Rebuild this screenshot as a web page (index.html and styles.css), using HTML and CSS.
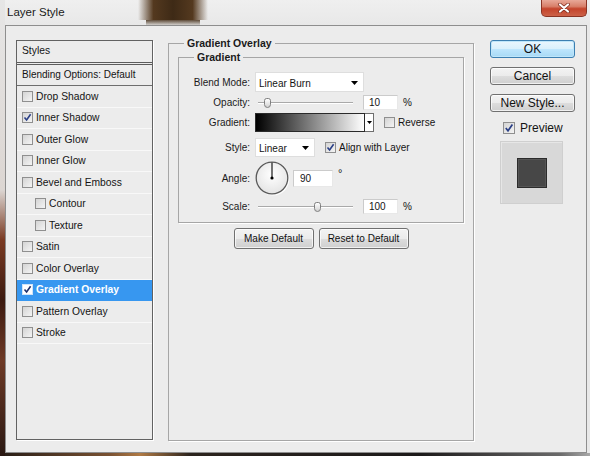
FILE: index.html
```html
<!DOCTYPE html>
<html>
<head>
<meta charset="utf-8">
<title>Layer Style</title>
<link rel="stylesheet" href="styles.css">
</head>
<body>
<div class="window">
  <div class="titlebar">
    <span class="title">Layer Style</span>
    <div class="close">
      <svg width="12" height="10" viewBox="0 0 12 10"><path d="M2 1.5 L10 8.5 M10 1.5 L2 8.5" stroke="#7a2a1c" stroke-width="3.6" stroke-linecap="round"/><path d="M2 1.5 L10 8.5 M10 1.5 L2 8.5" stroke="#ffffff" stroke-width="2.2" stroke-linecap="round"/></svg>
    </div>
  </div>
  <div class="client">
    <div class="styles-list">
      <div class="hdr">Styles</div>
      <div class="blend">Blending Options: Default</div>
      <div class="item"><span class="cb"></span>Drop Shadow</div>
      <div class="item"><span class="cb"><svg viewBox="0 0 9 9" width="9" height="9"><path d="M1.5 4.5 L3.6 7 L7.6 1.2" fill="none" stroke="#2a3f86" stroke-width="1.6"/></svg></span>Inner Shadow</div>
      <div class="item"><span class="cb"></span>Outer Glow</div>
      <div class="item"><span class="cb"></span>Inner Glow</div>
      <div class="item"><span class="cb"></span>Bevel and Emboss</div>
      <div class="item sub"><span class="cb"></span>Contour</div>
      <div class="item sub"><span class="cb"></span>Texture</div>
      <div class="item"><span class="cb"></span>Satin</div>
      <div class="item"><span class="cb"></span>Color Overlay</div>
      <div class="item selected"><span class="cb white"><svg viewBox="0 0 9 9" width="9" height="9"><path d="M1.5 4.5 L3.6 7 L7.6 1.2" fill="none" stroke="#1d2f6a" stroke-width="1.6"/></svg></span>Gradient Overlay</div>
      <div class="item"><span class="cb"></span>Pattern Overlay</div>
      <div class="item"><span class="cb"></span>Stroke</div>
    </div>

    <fieldset class="group outer">
      <legend>Gradient Overlay</legend>
      <fieldset class="group inner">
        <legend>Gradient</legend>
        <div class="form">
          <span class="lbl">Blend Mode:</span>
          <div class="ctl">
            <div class="select wide"><span>Linear Burn</span><svg width="7" height="4" viewBox="0 0 7 4"><polygon points="0,0 7,0 3.5,4" fill="#000"/></svg></div>
          </div>

          <span class="lbl">Opacity:</span>
          <div class="ctl">
            <div class="slider"><div class="track"></div><div class="thumb thumb-opacity"></div></div>
            <div class="num">10</div>
            <span class="unit">%</span>
          </div>

          <span class="lbl">Gradient:</span>
          <div class="ctl">
            <div class="swatch"></div>
            <div class="swatch-btn"><svg width="5" height="3" viewBox="0 0 5 3"><polygon points="0,0 5,0 2.5,3" fill="#000"/></svg></div>
            <span class="cb gap10"></span>
            <span class="cbtext">Reverse</span>
          </div>

          <span class="lbl">Style:</span>
          <div class="ctl">
            <div class="select narrow"><span>Linear</span><svg width="7" height="4" viewBox="0 0 7 4"><polygon points="0,0 7,0 3.5,4" fill="#000"/></svg></div>
            <span class="cb gap10"><svg viewBox="0 0 9 9" width="9" height="9"><path d="M1.5 4.5 L3.6 7 L7.6 1.2" fill="none" stroke="#2a3f86" stroke-width="1.6"/></svg></span>
            <span class="cbtext">Align with Layer</span>
          </div>

          <span class="lbl">Angle:</span>
          <div class="ctl">
            <svg class="dial" width="34" height="34" viewBox="0 0 34 34">
              <defs><radialGradient id="dg" cx="50%" cy="40%" r="60%"><stop offset="0" stop-color="#ffffff"/><stop offset="1" stop-color="#e4e4e4"/></radialGradient></defs>
              <circle cx="17" cy="17" r="15.8" fill="url(#dg)" stroke="#5a5a5a" stroke-width="1.3"/>
              <line x1="17" y1="17" x2="17" y2="1.5" stroke="#1a1a1a" stroke-width="1.2"/>
              <circle cx="17" cy="17" r="1.6" fill="#000"/>
            </svg>
            <div class="num angle">90</div>
            <span class="deg">°</span>
          </div>

          <span class="lbl">Scale:</span>
          <div class="ctl">
            <div class="slider"><div class="track"></div><div class="thumb thumb-scale"></div></div>
            <div class="num">100</div>
            <span class="unit">%</span>
          </div>
        </div>
      </fieldset>
      <div class="btnrow">
        <div class="btn small w80">Make Default</div>
        <div class="btn small w90">Reset to Default</div>
      </div>
    </fieldset>

    <div class="right">
      <div class="btn big ok">OK</div>
      <div class="btn big">Cancel</div>
      <div class="btn big">New Style...</div>
      <div class="preview-row">
        <span class="cb big-cb"><svg viewBox="0 0 10 10" width="10" height="10"><path d="M1.8 5 L4 7.8 L8.4 1.4" fill="none" stroke="#2a3f86" stroke-width="1.7"/></svg></span>
        <span>Preview</span>
      </div>
      <div class="preview-box"><div class="preview-square"></div></div>
    </div>
  </div>
</div>
</body>
</html>
```

FILE: styles.css
```css
* { box-sizing: border-box; }
html, body { margin: 0; padding: 0; }
body {
  width: 590px;
  height: 456px;
  overflow: hidden;
  font-family: "Liberation Sans", Arial, sans-serif;
  color: #141414;
  background:
    linear-gradient(to right, rgba(120, 100, 80, 0) 0, #54391f 22%, #3e2a16 50%, #54391f 78%, rgba(120, 100, 80, 0) 100%) 138px 0 / 70px 20px no-repeat,
    linear-gradient(to bottom, rgba(70, 48, 26, 0.85), rgba(140, 120, 100, 0)) 146px 20px / 54px 6px no-repeat,
    linear-gradient(to bottom, #e6e6e6 0, #dcd6d2 190px, #7a3a22 240px, #3c1a10 300px, #6e3a26 360px, #2a1812 456px) 0 0 / 5px 456px no-repeat,
    linear-gradient(to right, #261c16 0, #7a5232 110px, #b07a44 140px, #2c241e 190px, #1c1a1a 420px, #6a6a6a 560px, #a8a8a8 590px) 0 453px / 590px 3px no-repeat,
    linear-gradient(to bottom, #efefef, #e8e8e8 25px);
}

.window {
  display: flex;
  flex-direction: column;
  height: 456px;
}

.titlebar {
  height: 25px;
  display: flex;
  justify-content: space-between;
  align-items: flex-start;
}
.title {
  font-size: 11.5px;
  line-height: 24px;
  padding-left: 7px;
  color: #1a1a1a;
}
.close {
  width: 46px;
  height: 17px;
  margin-right: 3px;
  border: 1px solid #8a3424;
  border-top: none;
  border-radius: 0 0 5px 5px;
  background: linear-gradient(to bottom, #e8a898 0%, #d8806a 40%, #c4442c 55%, #cc6248 100%);
  display: flex;
  align-items: center;
  justify-content: center;
}

.client {
  margin-left: 5px;
  width: 582px;
  height: 428px;
  border: 1px solid #8e8e8e;
  background: #ececec;
  display: flex;
  align-items: flex-start;
  padding: 10px 10px 0 10px;
}

/* Left styles list */
.styles-list {
  width: 137px;
  height: 400px;
  margin-top: 4px;
  border: 1px solid #626262;
  box-shadow: 1px 1px 0 #ffffff;
  font-size: 10.3px;
  background: #ececec;
}
.hdr {
  height: 24px;
  padding-left: 5px;
  line-height: 20px;
  border-bottom: 3px double #5c5c5c;
}
.blend {
  height: 21px;
  padding-left: 5px;
  line-height: 19px;
  border-bottom: 1px solid #6e6e6e;
  font-size: 10px;
}
.item {
  height: 21.5px;
  display: flex;
  align-items: center;
  gap: 3px;
  padding-left: 5px;
  border-bottom: 1px solid #f8f8f8;
}
.item.sub { padding-left: 18px; }
.item.selected {
  background: #3797f0;
  color: #ffffff;
  font-weight: bold;
  border-bottom-color: #3797f0;
}

.cb {
  width: 11px;
  height: 11px;
  flex: none;
  border: 1px solid #8f8f8f;
  background: linear-gradient(135deg, #d4d4d4, #f4f4f4);
  display: inline-flex;
  align-items: center;
  justify-content: center;
}
.cb.white { background: #ffffff; border-color: #d0e4f8; }
.cb svg { display: block; }

/* Middle fieldsets */
fieldset.group {
  margin: 0;
  min-width: 0;
  border: 1px solid #a6a6a6;
  box-shadow: 1px 1px 0 #ffffff;
}
fieldset.group legend {
  font-weight: bold;
  font-size: 10.5px;
  line-height: 14px;
  padding: 0 3px;
  color: #1a1a1a;
}
.outer {
  width: 306px;
  height: 405px;
  margin-left: 15px !important;
  padding: 0 9px 0 9px;
}
.outer > legend { margin-left: 6px; }
.inner {
  padding: 6px 0 6px 0;
}
.inner > legend { margin-left: 15px; }

.form {
  display: grid;
  grid-template-columns: 71px 1fr;
  grid-template-rows: 24px 16px 24px 26px 36px 20px;
  column-gap: 5px;
  align-items: center;
  font-size: 10px;
}
.lbl { text-align: right; color: #1a1a1a; }
.ctl {
  display: flex;
  align-items: center;
}

.select {
  height: 20px;
  background: #ffffff;
  border: 1px solid #dedede;
  display: flex;
  align-items: center;
  justify-content: space-between;
  padding: 2px 5px 0 3px;
}
.select.wide { width: 109px; }
.select.narrow { width: 60px; height: 19px; }

.slider {
  position: relative;
  width: 103px;
  height: 15px;
}
.track {
  position: absolute;
  left: 3px;
  right: 5px;
  top: 7px;
  height: 2px;
  border-top: 1px solid #a9a9a9;
  border-bottom: 1px solid #ffffff;
}
.thumb {
  position: absolute;
  top: 3px;
  width: 7px;
  height: 10px;
  border: 1px solid #7f7f7f;
  border-radius: 3px 3px 4px 4px;
  background: linear-gradient(to bottom, #ffffff, #d2d2d2);
}
.thumb-opacity { left: 9px; }
.thumb-scale { left: 59px; }

.num {
  width: 35px;
  height: 15px;
  margin-left: 5px;
  background: #ffffff;
  border: 1px solid;
  border-color: #cbcbcb #e8e8e8 #e8e8e8 #cbcbcb;
  padding-left: 5px;
  line-height: 14px;
  font-size: 10px;
}
.num.angle {
  width: 40px;
  height: 17px;
  margin-left: 4px;
  line-height: 16px;
  padding-left: 6px;
}
.unit { margin-left: 5px; font-size: 10px; }
.deg { margin-left: 5px; align-self: flex-start; margin-top: 6px; font-size: 11px; }

.swatch {
  width: 110px;
  height: 19px;
  border: 1px solid #2a2a2a;
  background: linear-gradient(to right, #000000, #ffffff);
}
.swatch-btn {
  width: 9px;
  height: 19px;
  border: 1px solid #6e6e6e;
  border-left: none;
  background: #ffffff;
  display: flex;
  align-items: center;
  justify-content: center;
}
.gap10 { margin-left: 10px; }
.cbtext { margin-left: 3px; }

.dial { display: block; filter: drop-shadow(1px 1px 0 rgba(255,255,255,0.9)); }

.btnrow {
  display: flex;
  justify-content: center;
  gap: 5px;
  margin-top: 5px;
}

.btn {
  border: 1px solid #707070;
  border-radius: 3px;
  background: linear-gradient(to bottom, #f3f3f3 0%, #ebebeb 50%, #dddddd 51%, #cfcfcf 100%);
  display: flex;
  align-items: center;
  justify-content: center;
  color: #111;
  box-shadow: inset 0 0 0 1px rgba(255,255,255,0.7);
}
.btn.small { height: 21px; font-size: 10px; }
.w80 { width: 80px; }
.w90 { width: 90px; }

.right {
  width: 85px;
  margin-left: 16px;
  margin-top: 4px;
  display: flex;
  flex-direction: column;
}
.btn.big {
  height: 18px;
  font-size: 12px;
  margin-bottom: 9px;
}
.btn.ok {
  border-color: #3c7fb1;
  background: linear-gradient(to bottom, #eaf6fd 0%, #d9f0fc 50%, #bee6fd 51%, #a7d9f5 100%);
  box-shadow: inset 0 0 0 1px #bfe6fa;
}
.preview-row {
  display: flex;
  align-items: center;
  gap: 5px;
  padding-left: 13px;
  height: 14px;
  font-size: 12px;
}
.big-cb { width: 12px; height: 12px; }
.preview-box {
  width: 63px;
  height: 63px;
  margin-left: 10px;
  margin-top: 6px;
  background: #d8d8d8;
  border: 1px solid #cfcfcf;
  box-shadow: inset 1px 1px 0 #e6e6e6;
  padding: 16px;
}
.preview-square {
  width: 30px;
  height: 30px;
  background: #474747;
  border: 1px solid #2b2b2b;
  box-shadow: inset 0 0 0 1px #555;
}
```
